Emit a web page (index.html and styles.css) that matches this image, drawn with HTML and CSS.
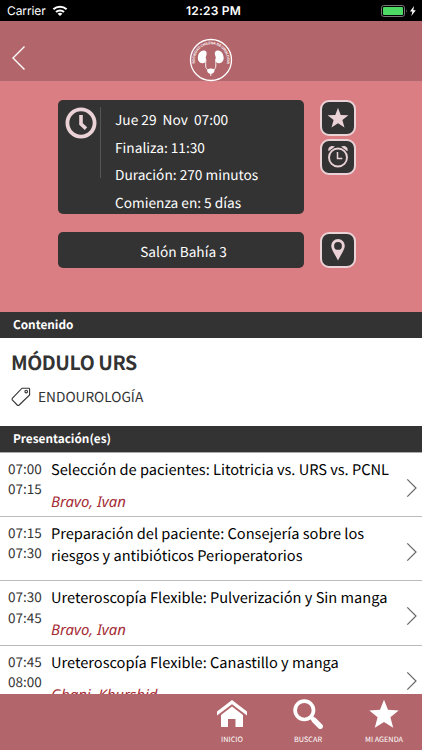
FILE: index.html
```
<!DOCTYPE html>
<html lang="es">
<head>
<meta charset="utf-8">
<title>Módulo URS</title>
<link rel="stylesheet" href="styles.css">
</head>
<body>
<div class="status">
  <div class="carrier"><span>Carrier</span>
    <svg width="16" height="12" viewBox="0 0 16 12"><g fill="none" stroke="#fff" stroke-width="2"><path d="M1.400 4.300A9.600 9.600 0 0 1 14.600 4.300"/><path d="M4 7A5.800 5.800 0 0 1 12 7"/></g><path d="M5.600 8.700a3.600 3.600 0 0 1 4.800 0L8 11.100z" fill="#fff"/></svg>
  </div>
  <div class="clock">12:23 PM</div>
  <div class="battery">
    <svg width="36" height="12" viewBox="0 0 36 12"><rect x=".5" y=".5" width="23" height="11" rx="2.200" fill="none" stroke="#777"/><rect x="2" y="2" width="20" height="8" rx="1" fill="#4cd964"/><path d="M25 4q1.400 2 0 4z" fill="#777"/><path d="M33 1l-4 5.500h2.400L30.300 11l4.500-5.800h-2.500z" fill="#fff"/></svg>
  </div>
</div>
<header class="nav">
  <svg class="back" width="14" height="26" viewBox="0 0 14 26"><path d="M12.500 1.500L1 13l11.500 11.500" fill="none" stroke="#fff" stroke-width="1.400"/></svg>
  <svg class="logo" width="44" height="44" viewBox="0 0 44 44">
    <circle cx="22" cy="22" r="20.500" fill="none" stroke="#fff" stroke-width="1.300"/>
    <path id="arc" d="M6.100 25.500A16.200 16.200 0 1 1 37.900 25.500" fill="none"/>
    <text class="seal"><textPath href="#arc" textLength="57">SOCIEDAD CHILENA DE UROLOGIA</textPath></text>
    <g fill="#fff"><path d="M14.300 12.500c3-.4 4 2.200 3 5-.5 1.600-.9 2.600-.4 4 .3 2.500-1.400 4-3.600 3.800-3-.3-4.800-2.800-4.400-6.300.4-3.500 2.400-6.200 5.400-6.500z"/><path d="M29.200 12.500c-3-.4-4 2.200-3 5 .5 1.600.9 2.600.4 4-.3 2.500 1.400 4 3.600 3.800 3-.3 4.800-2.800 4.400-6.300-.4-3.500-2.400-6.200-5.400-6.500z"/><path d="M18.300 31.500q3.500-2.200 7 0c.6 2.600-1 4.300-3.500 4.300s-4.100-1.700-3.500-4.300z"/></g>
    <path d="M16 20c1.500 1 .4 5 .7 8 .2 2.500 1 3.400 2.800 4M27.500 20c-1.500 1-.4 5-.7 8-.2 2.500-1 3.400-2.800 4M21.800 35v3" fill="none" stroke="#fff" stroke-width=".9"/>
  </svg>
</header>
<section class="hero">
  <div class="info">
    <svg class="face" width="32" height="32" viewBox="0 0 32 32"><circle cx="16" cy="16" r="13.600" fill="none" stroke="#ead2d6" stroke-width="3.800"/><path d="M16 8v9l5 4.600" fill="none" stroke="#ead2d6" stroke-width="3.600"/></svg>
    <div class="rule"></div>
    <div class="details"><p>Jue 29&nbsp; Nov&nbsp; 07:00</p><p>Finaliza: 11:30</p><p>Duración: 270 minutos</p><p>Comienza en: 5 días</p></div>
  </div>
  <div class="actions">
    <div class="btn"><svg width="30" height="30" viewBox="0 0 30 30"><path d="M15 4.800l2.700 7.200 7.700.3-6 4.800 2.100 7.400L15 20.300l-6.500 4.200 2.100-7.400-6-4.800 7.700-.3z" fill="#ead2d6"/></svg></div>
    <div class="btn"><svg width="30" height="30" viewBox="0 0 30 30"><g fill="none" stroke="#ead2d6"><circle cx="15" cy="15.500" r="9" stroke-width="1.900"/><path d="M14.500 10v6.500h4.800" stroke-width="1.500"/></g><path d="M5.600 9.300C4.200 5.300 8 2.600 12 4.500zM24.400 9.300C25.800 5.300 22 2.600 18 4.500z" fill="#ead2d6"/></svg></div>
  </div>
  <div class="room">Salón Bahía 3</div>
  <div class="btn"><svg width="30" height="30" viewBox="0 0 30 30"><path fill-rule="evenodd" d="M15 4a6.800 6.800 0 0 0-6.800 6.800C8.200 15 12.500 20 15 25.500 17.500 20 21.800 15 21.800 10.800A6.800 6.800 0 0 0 15 4zm0 3a3.900 3.900 0 1 1 0 7.800A3.900 3.900 0 0 1 15 7z" fill="#ead2d6"/></svg></div>
</section>
<h2 class="bar content-bar">Contenido</h2>
<section class="module">
  <h1>MÓDULO URS</h1>
  <div class="tag"><svg width="20" height="20" viewBox="0 0 20 20" fill="none" stroke="#333" stroke-width="1.100"><path d="M11 1.200h6.800q.8 0 .8.800V8L8.200 18q-1 .9-2 0L1.500 13.200q-.8-1 0-2z"/><circle cx="15.200" cy="4.600" r="1.300"/></svg><span>ENDOUROLOGÍA</span></div>
</section>
<h2 class="bar talks-bar">Presentación(es)</h2>
<main class="talks">
  <article class="talk"><div class="time">07:00<br>07:15</div><div class="body"><div>Selección de pacientes: Litotricia vs. URS vs. PCNL</div><div class="who">Bravo, Ivan</div></div><svg class="chev" width="12" height="20" viewBox="0 0 12 20"><path d="M1.300 1.300L10 10l-8.700 8.700"/></svg></article>
  <article class="talk"><div class="time">07:15<br>07:30</div><div class="body"><div>Preparación del paciente: Consejería sobre los<br>riesgos y antibióticos Perioperatorios</div></div><svg class="chev" width="12" height="20" viewBox="0 0 12 20"><path d="M1.300 1.300L10 10l-8.700 8.700"/></svg></article>
  <article class="talk"><div class="time">07:30<br>07:45</div><div class="body"><div>Ureteroscopía Flexible: Pulverización y Sin manga</div><div class="who">Bravo, Ivan</div></div><svg class="chev" width="12" height="20" viewBox="0 0 12 20"><path d="M1.300 1.300L10 10l-8.700 8.700"/></svg></article>
  <article class="talk"><div class="time">07:45<br>08:00</div><div class="body"><div>Ureteroscopía Flexible: Canastillo y manga</div><div class="who">Ghani, Khurshid</div></div><svg class="chev" width="12" height="20" viewBox="0 0 12 20"><path d="M1.300 1.300L10 10l-8.700 8.700"/></svg></article>
</main>
<footer class="tabs">
  <div class="tab"><svg width="32" height="32" viewBox="0 0 32 32" fill="#fff"><path d="M16 2L1 13.500v4L16 6.200l15 11.300v-4z"/><path d="M16 8.600L5 17v12h7v-8h7.500v8H27V17z"/></svg><span>INICIO</span></div>
  <div class="tab"><svg width="32" height="32" viewBox="0 0 32 32" fill="none" stroke="#fff"><circle cx="12.300" cy="12.300" r="9.200" stroke-width="3.700"/><path d="M19 19l3 3" stroke-width="4"/><path d="M22.300 22.300l6 6" stroke-width="5.300" stroke-linecap="round"/></svg><span>BUSCAR</span></div>
  <div class="tab"><svg width="32" height="32" viewBox="0 0 32 32"><path d="M16 1.800l4 10 10.700.6-8.300 6.800 2.800 10.500L16 23.900l-9.200 5.800 2.800-10.500-8.300-6.800 10.700-.6z" fill="#fff"/></svg><span>MI AGENDA</span></div>
</footer>
</body>
</html>
```
FILE: styles.css
```
* { box-sizing: border-box; margin: 0; padding: 0; }
body { width: 422px; height: 750px; overflow: hidden; display: flex; flex-direction: column; background: #fff; color: #000; font-family: "Noto Sans CJK SC", "Open Sans", sans-serif; white-space: nowrap; text-rendering: geometricPrecision; }
svg { display: block; flex: none; }
.status { height: 21px; flex: none; display: grid; grid-template-columns: 1fr auto 1fr; align-items: center; padding: 0 5px 0 7px; background: #000; color: #fff; font: 12px/21px Inter, sans-serif; }
.carrier { display: flex; align-items: center; gap: 6px; letter-spacing: -.1px; }
.clock { font-weight: 600; letter-spacing: .22px; padding-left: 3px; }
.battery { justify-self: end; }
.nav { height: 61px; flex: none; display: grid; grid-template-columns: 1fr auto 1fr; align-items: center; background: #b2666b; border-bottom: 1px solid #d38186; }
.back { margin: 13px 0 0 12px; }
.logo { margin-top: 17px; }
.seal { font: bold 3.600px "Liberation Sans", sans-serif; fill: #fff; }
.hero { height: 230px; flex: none; display: grid; grid-template-columns: 246px 36px; grid-template-rows: 114px 36px; column-gap: 16px; row-gap: 18px; padding: 18px 0 0 58px; background: #da7e83; }
.info { display: flex; background: #333; border-radius: 5px; padding: 7px 0 0 7px; color: #fff; }
.rule { width: 1px; height: 71px; margin-left: 3px; background: #555; }
.details { margin: -1px 0 0 14px; font-size: 13.700px; line-height: 27.500px; }
.actions { display: flex; flex-direction: column; gap: 3px; }
.btn { width: 36px; height: 36px; border: 2px solid #ead2d6; border-radius: 9px; background: #333; display: grid; place-items: center; }
.room { height: 36px; border-radius: 5px; background: #333; color: #fff; text-align: center; font-size: 13.700px; line-height: 38px; padding-left: 5px; }
.bar { flex: none; background: #333; color: #fff; font-size: 11.800px; font-weight: 700; padding-left: 13px; }
.content-bar { height: 26px; line-height: 25px; }
.module { height: 88px; flex: none; padding: 8px 0 0 11px; color: #333; }
h1 { font-size: 19.500px; line-height: 32px; letter-spacing: -.4px; }
.tag { display: flex; gap: 7px; font-size: 13.700px; line-height: 20px; margin-top: 9px; }
.tag span { line-height: 18px; }
.talks-bar { height: 27px; line-height: 25px; border-bottom: 1px solid #aaa; }
.talks { height: 241px; flex: none; overflow: hidden; }
.talk { height: 64.200px; display: flex; border-bottom: 1px solid #bbb; padding-left: 8px; }
.time { width: 43px; color: #333; font-size: 13.500px; line-height: 20.300px; padding-top: 5px; }
.body { width: 355px; font-size: 14.600px; line-height: 22px; padding-top: 6px; }
.who { margin-top: 10px; color: #a52c35; font: italic 14.900px/22px "Noto Sans", sans-serif; }
.chev { margin-top: 25px; fill: none; stroke: #666; stroke-width: 1.200; }
.tabs { height: 57px; flex: none; display: grid; grid-template-columns: 76px 76px 76px; justify-content: end; background: #b2666b; padding-top: 4px; }
.tab { display: flex; flex-direction: column; align-items: center; color: #fff; font-size: 7.300px; line-height: 20px; }
```
